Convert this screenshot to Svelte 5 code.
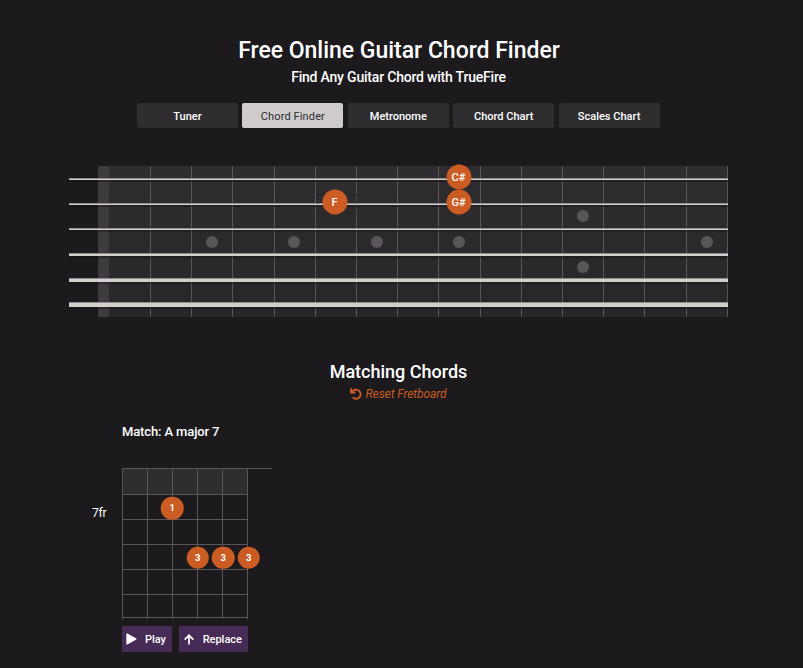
<script>
  const tabs = ['Tuner', 'Chord Finder', 'Metronome', 'Chord Chart', 'Scales Chart'];
  const active = 'Chord Finder';
  const frets = Array.from({ length: 15 });
  const strings = [
    { y: 12, h: 2 }, { y: 37, h: 2 }, { y: 62, h: 2 },
    { y: 87, h: 3 }, { y: 112, h: 4 }, { y: 136, h: 5 }
  ];
  const inlays = [
    [114, 75.7], [196, 75.7], [279, 75.7], [361, 75.7], [609, 75.7], [485, 49.7], [485, 100.7]
  ];
  const notes = [
    { x: 236.5, y: 36, t: 'F' },
    { x: 360.5, y: 11, t: 'C#' },
    { x: 360.5, y: 36, t: 'G#' }
  ];
  const rows = [0, 1, 2, 3, 4, 5];
  const cols = [0, 1, 2, 3, 4];
  const fingers = [
    { x: 50.3, y: 40.3, t: 1 },
    { x: 75.8, y: 89.5, t: 3 }, { x: 101.3, y: 89.5, t: 3 }, { x: 126.8, y: 89.5, t: 3 }
  ];
</script>

<main>
  <h1>Free Online Guitar Chord Finder</h1>
  <h2>Find Any Guitar Chord with TrueFire</h2>
  <nav>
    {#each tabs as tab}
      <button class="tab" class:active={tab === active}>{tab}</button>
    {/each}
  </nav>

  <section class="fretboard">
    <div class="nut"></div>
    <div class="frets">
      {#each frets as _}<div class="fret"></div>{/each}
    </div>
    {#each inlays as [x, y]}
      <i class="inlay" style="left:{x}px;top:{y}px"></i>
    {/each}
    {#each strings as s}
      <i class="string" style="top:{s.y}px;height:{s.h}px"></i>
    {/each}
    <i class="focus"></i>
    {#each notes as n}
      <span class="note" style="left:{n.x}px;top:{n.y}px">{n.t}</span>
    {/each}
  </section>

  <h3>Matching Chords</h3>
  <a class="reset">
    <svg width="12" height="12" viewBox="0 0 12 12" fill="none" stroke="currentColor">
      <path d="M2 4A4.6 4.6 0 1 1 2.7 9.4" stroke-width="1.9" />
      <path d="M1 .2V4.5H5.4" stroke-width="1.9" />
    </svg>Reset Fretboard
  </a>

  <section class="match">
    <h4>Match: A major 7</h4>
    <div class="chord">
      <span class="pos">7fr</span>
      <div class="diagram">
        {#each rows as r}
          <div class="row" class:first={r === 0} class:last={r === 5}>
            {#each cols as c}<div class="cell"></div>{/each}
          </div>
        {/each}
        <div class="row tail">
          {#each cols as c}<div class="cell"></div>{/each}
        </div>
        <i class="overhang"></i>
        {#each fingers as f}
          <span class="finger" style="left:{f.x}px;top:{f.y}px">{f.t}</span>
        {/each}
      </div>
    </div>
    <div class="actions">
      <button class="play">
        <svg width="11" height="12" viewBox="0 0 11 12"><path d="M.4 1.1Q.4 .1 1.4 .5L10.3 5.4Q11 6 10.3 6.6L1.4 11.5Q.4 11.9 .4 10.9Z" fill="#fff" /></svg>
        <span>Play</span>
      </button>
      <button class="replace">
        <svg width="10" height="11" viewBox="0 0 10 11" fill="none" stroke="#fff" stroke-width="1.7"><path d="M5 10.6V1.4M.7 5.7L5 1.3L9.3 5.7" /></svg>
        <span>Replace</span>
      </button>
    </div>
  </section>
</main>

<style>
  :global(body) { background: #1c1a1d; }
  main {
    box-sizing: border-box;
    height: 668px;
    padding-top: 36px;
    display: flex;
    flex-direction: column;
    align-items: center;
    background: #1c1a1d;
    color: #fff;
    font-family: Roboto, "Liberation Sans", sans-serif;
    overflow: hidden;
  }
  h1, h2, h3, h4 { margin: 0; font-weight: 500; white-space: nowrap; }
  h1 { font-size: 23px; line-height: 30px; margin-right: 5px; letter-spacing: -.02px; }
  h2 { font-size: 14px; line-height: 20px; margin: 1px 6px 0 0; letter-spacing: -.2px; }
  nav { display: flex; gap: 4.4px; margin: 16px 6.4px 0 0; width: 522.6px; }
  button {
    border: 0;
    padding: 0;
    font: inherit;
    color: #fff;
    display: flex;
    align-items: center;
  }
  .tab {
    flex: 1;
    justify-content: center;
    height: 25px;
    padding-top: 1px;
    border-radius: 2px;
    background: #2f2d30;
    font-size: 11px;
    font-weight: 500;
    white-space: nowrap;
  }
  .tab.active { background: #d0cccb; color: #2f2d36; font-weight: 400; letter-spacing: .12px; }

  .fretboard {
    position: relative;
    display: flex;
    width: 630px;
    height: 151px;
    margin: 38px 0 0 23px;
    background: linear-gradient(#2f2d30, #282629);
  }
  .nut { width: 11px; background: #3f3940; }
  .frets { flex: 1; display: flex; padding: 0 .15px 0 .65px; }
  .fret { flex: 1; border-right: 1px solid #5a565b; }
  .inlay, .note, .finger {
    position: absolute;
    border-radius: 50%;
    transform: translate(-50%, -50%);
  }
  .inlay { width: 12px; height: 12px; background: #5a555b; }
  .string {
    position: absolute;
    left: -29px;
    right: 0;
    box-sizing: border-box;
    background: #d2cfcd;
    border-top: 1px solid #918d8d;
    box-shadow: 0 2px 1px rgba(20, 18, 21, .45);
  }
  .focus {
    position: absolute;
    left: 219px;
    top: 28px;
    width: 38px;
    height: 18px;
    border: 1px dotted rgba(22, 20, 23, .6);
  }
  .note {
    width: 25px;
    line-height: 25px;
    background: #ca5c24;
    text-align: center;
    font-size: 11px;
    font-weight: 500;
  }
  h3 { font-size: 18px; line-height: 24px; margin: 43px 6px 0 0; }
  .reset {
    display: flex;
    align-items: center;
    gap: 3px;
    margin: 2px 6px 0 0;
    color: #ca5c24;
    font-size: 12px;
    line-height: 16px;
    font-style: italic;
    letter-spacing: -.08px;
  }
  .match { align-self: stretch; padding-left: 122px; margin-top: 22px; }
  h4 { font-size: 13px; line-height: 16px; letter-spacing: -.13px; }
  .chord { display: flex; margin: 28px 0 0 -30px; }
  .pos { width: 30px; padding-top: 37px; font-size: 12px; line-height: 16px; letter-spacing: -.2px; }
  .diagram { position: relative; width: 126px; }
  .row {
    display: flex;
    box-sizing: border-box;
    height: 25px;
    border-top: 1px solid #5a565b;
    border-left: 1px solid #5a565b;
  }
  .row.first { height: 26px; background: #2f2d30; }
  .row.last { height: 23px; }
  .row.tail { height: 2px; }
  .cell { flex: 1; border-right: 1px solid #5a565b; }
  .overhang {
    position: absolute;
    left: 126px;
    top: 0;
    width: 24px;
    height: 1px;
    background: #5a565b;
  }
  .finger {
    width: 22.5px;
    line-height: 22.5px;
    background: #ca5c24;
    text-align: center;
    font-size: 9.5px;
    font-weight: 700;
  }
  .actions { display: flex; gap: 7px; margin-top: 7px; }
  .actions button {
    box-sizing: border-box;
    height: 26px;
    justify-content: space-between;
    padding: 0 6px 0 4px;
    background: #472b57;
    font-size: 11px;
    font-weight: 500;
  }
  .actions .replace { padding-left: 5px; }
  .play { width: 50px; }
  .replace { width: 69px; }
</style>
